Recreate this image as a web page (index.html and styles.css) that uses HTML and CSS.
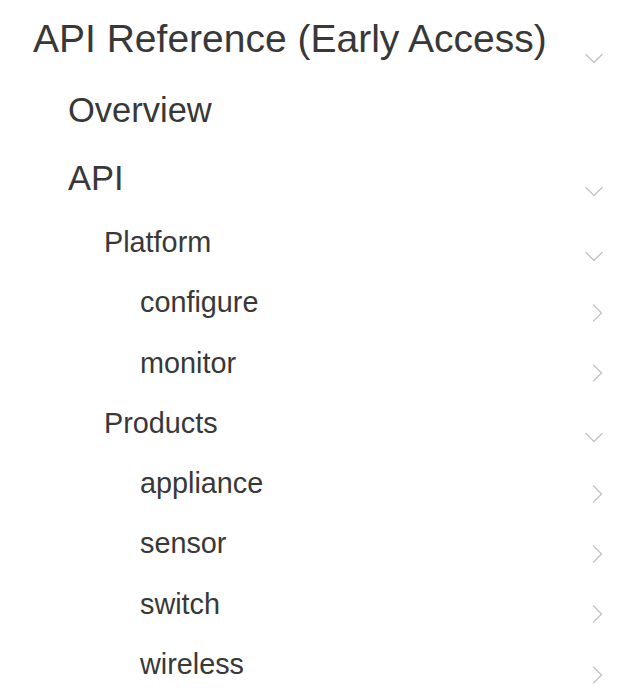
FILE: index.html
```html
<!DOCTYPE html>
<html lang="en">
<head>
<meta charset="utf-8">
<title>API Reference</title>
<link rel="stylesheet" href="styles.css">
</head>
<body>
<nav class="nav">
  <ul class="tree level1">
    <li>
      <div class="row row-l1"><span class="label">API Reference (Early Access)</span><svg class="chev chev-l1" viewBox="0 0 18 18" width="18" height="18"><polyline points="1,4.5 9,12.5 17,4.5"/></svg></div>
      <ul class="tree level2">
        <li><div class="row row-l2"><span class="label">Overview</span></div></li>
        <li>
          <div class="row row-l2"><span class="label">API</span><svg class="chev chev-l2" viewBox="0 0 18 18" width="18" height="18"><polyline points="1,4.5 9,12.5 17,4.5"/></svg></div>
          <ul class="tree level3">
            <li>
              <div class="row row-l3"><span class="label">Platform</span><svg class="chev chev-l3" viewBox="0 0 18 18" width="18" height="18"><polyline points="1,4.5 9,12.5 17,4.5"/></svg></div>
              <ul class="tree level4">
                <li><div class="row row-l3"><span class="label">configure</span><svg class="chev chev-r" viewBox="0 0 18 18" width="18" height="18"><polyline points="8.5,1 16.5,9 8.5,17"/></svg></div></li>
                <li><div class="row row-l3"><span class="label">monitor</span><svg class="chev chev-r" viewBox="0 0 18 18" width="18" height="18"><polyline points="8.5,1 16.5,9 8.5,17"/></svg></div></li>
              </ul>
            </li>
            <li>
              <div class="row row-l3"><span class="label">Products</span><svg class="chev chev-l3" viewBox="0 0 18 18" width="18" height="18"><polyline points="1,4.5 9,12.5 17,4.5"/></svg></div>
              <ul class="tree level4">
                <li><div class="row row-l3"><span class="label">appliance</span><svg class="chev chev-r" viewBox="0 0 18 18" width="18" height="18"><polyline points="8.5,1 16.5,9 8.5,17"/></svg></div></li>
                <li><div class="row row-l3"><span class="label">sensor</span><svg class="chev chev-r" viewBox="0 0 18 18" width="18" height="18"><polyline points="8.5,1 16.5,9 8.5,17"/></svg></div></li>
                <li><div class="row row-l3"><span class="label">switch</span><svg class="chev chev-r" viewBox="0 0 18 18" width="18" height="18"><polyline points="8.5,1 16.5,9 8.5,17"/></svg></div></li>
                <li><div class="row row-l3"><span class="label">wireless</span><svg class="chev chev-r" viewBox="0 0 18 18" width="18" height="18"><polyline points="8.5,1 16.5,9 8.5,17"/></svg></div></li>
              </ul>
            </li>
          </ul>
        </li>
      </ul>
    </li>
  </ul>
</nav>
</body>
</html>
```
FILE: styles.css
```css
html, body {
  margin: 0;
  padding: 0;
  background: #ffffff;
}

body {
  font-family: "Liberation Sans", Arial, sans-serif;
  color: #383838;
  width: 622px;
  overflow: hidden;
}

.nav {
  padding-top: 1px;
  padding-right: 19px;
}

.tree {
  list-style: none;
  margin: 0;
  padding: 0;
}

.level1 { padding-left: 33px; }
.level2 { padding-left: 35px; }
.level3 { padding-left: 36px; }
.level4 { padding-left: 36px; }

.row {
  display: flex;
  justify-content: space-between;
  align-items: flex-start;
  white-space: nowrap;
}

.row-l1 {
  height: 75px;
  font-size: 39px;
  line-height: 75px;
}

.row-l2 {
  height: 68px;
  font-size: 34.5px;
  line-height: 68px;
}

.row-l3 {
  height: 60.3px;
  font-size: 28.8px;
  line-height: 60.3px;
}

.label {
  display: block;
}

.chev {
  flex: none;
  fill: none;
  stroke: #c4c4c4;
  stroke-width: 1.4;
  stroke-linecap: round;
  stroke-linejoin: round;
}

.chev-l1 { margin-top: 49px; }
.chev-l2 { margin-top: 39px; }
.chev-l3 { margin-top: 36px; }
.chev-r { margin-top: 31.7px; }
```
